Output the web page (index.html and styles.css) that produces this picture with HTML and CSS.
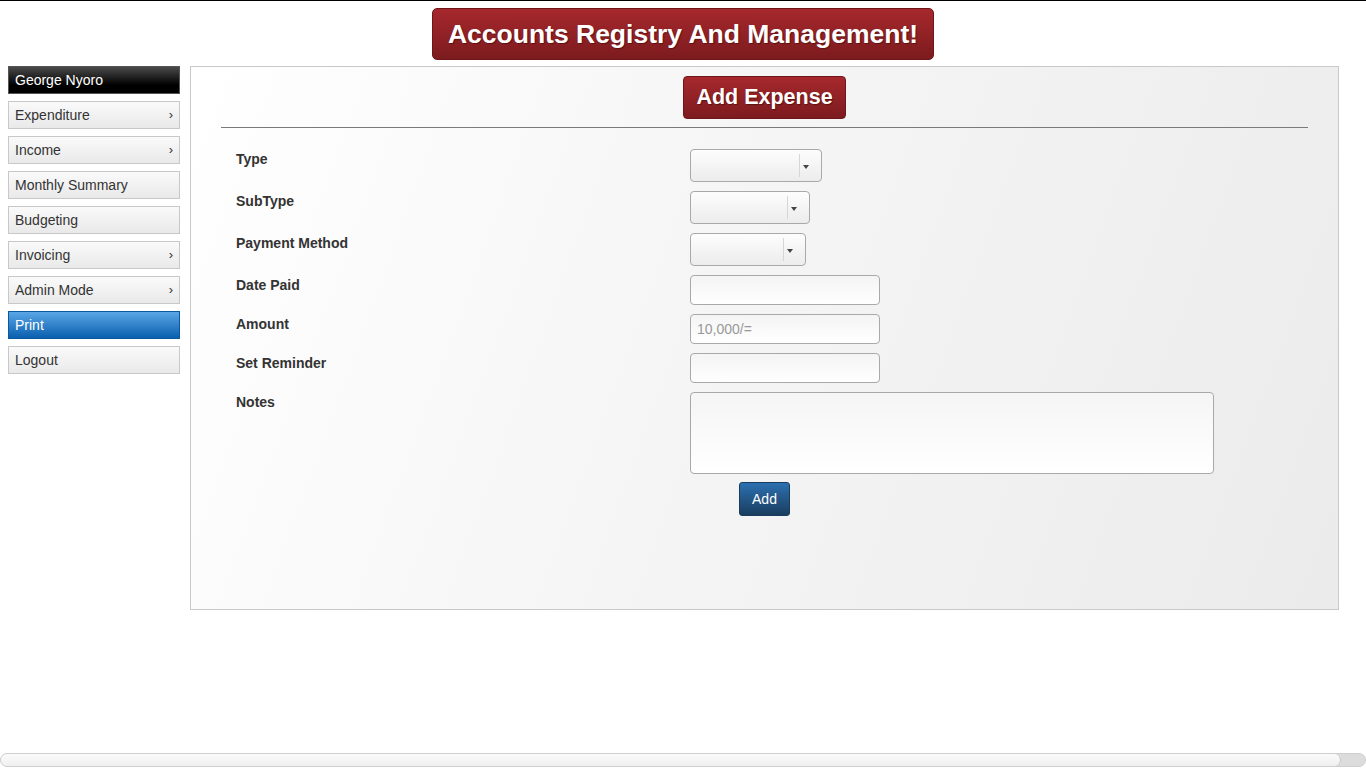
FILE: index.html
```html
<!DOCTYPE html>
<html>
<head>
<meta charset="utf-8">
<title>Accounts Registry And Management</title>
<link rel="stylesheet" href="styles.css">
</head>
<body>
<header class="top">
  <h1 class="title-btn">Accounts Registry And Management!</h1>
</header>
<div class="layout">
  <nav class="sidebar">
    <div class="nav-item user">George Nyoro</div>
    <div class="nav-item has-sub">Expenditure<span class="chev">›</span></div>
    <div class="nav-item has-sub">Income<span class="chev">›</span></div>
    <div class="nav-item">Monthly Summary</div>
    <div class="nav-item">Budgeting</div>
    <div class="nav-item has-sub">Invoicing<span class="chev">›</span></div>
    <div class="nav-item has-sub">Admin Mode<span class="chev">›</span></div>
    <div class="nav-item active">Print</div>
    <div class="nav-item">Logout</div>
  </nav>
  <main class="panel">
    <div class="panel-head">
      <h2 class="sub-btn">Add Expense</h2>
    </div>
    <hr class="rule">
    <form class="form">
      <label class="lbl">Type</label>
      <div class="field"><div class="select w132"><span class="sel-arrow"></span></div></div>
      <label class="lbl">SubType</label>
      <div class="field"><div class="select w120"><span class="sel-arrow"></span></div></div>
      <label class="lbl">Payment Method</label>
      <div class="field"><div class="select w116"><span class="sel-arrow"></span></div></div>
      <label class="lbl">Date Paid</label>
      <div class="field"><input class="inp" type="text"></div>
      <label class="lbl">Amount</label>
      <div class="field"><input class="inp" type="text" placeholder="10,000/="></div>
      <label class="lbl">Set Reminder</label>
      <div class="field"><input class="inp" type="text"></div>
      <label class="lbl">Notes</label>
      <div class="field"><textarea class="txt"></textarea></div>
      <div></div>
      <div class="field actions"><button type="button" class="add-btn">Add</button></div>
    </form>
  </main>
</div>
<div class="hscroll"><div class="hthumb"></div></div>
</body>
</html>
```

FILE: styles.css
```css
* { box-sizing: border-box; }
html, body { margin: 0; padding: 0; }
body {
  font-family: "Liberation Sans", Arial, sans-serif;
  font-size: 14px;
  color: #333;
  background: #fff;
  border-top: 1px solid #000;
  min-height: 768px;
}
.top {
  display: flex;
  justify-content: center;
  padding-top: 7px;
}
.title-btn {
  margin: 0;
  width: 502px;
  height: 52px;
  display: flex;
  align-items: center;
  justify-content: center;
  font-size: 26.5px;
  font-weight: bold;
  color: #fff;
  text-shadow: 1px 1px 1px rgba(60, 10, 10, 0.6);
  background: linear-gradient(#a6282d, #7c1b1e);
  border: 1px solid #6e1619;
  border-radius: 5px;
}
.layout {
  display: flex;
  align-items: flex-start;
  padding: 6px 0 0 8px;
  gap: 10px;
}
.sidebar {
  width: 172px;
  display: flex;
  flex-direction: column;
  gap: 7px;
}
.nav-item {
  height: 28px;
  line-height: 26px;
  padding: 0 6px;
  border: 1px solid #c8c8c8;
  background: linear-gradient(#fafafa, #e9e9e9);
  color: #333;
  font-size: 14px;
  display: flex;
  justify-content: space-between;
  align-items: center;
}
.chev { font-size: 13px; color: #333; }
.nav-item.user {
  background: linear-gradient(#4a4a4a, #000 70%);
  border-color: #555;
  color: #fff;
}
.nav-item.active {
  background: linear-gradient(#5aa6e6, #0a5fae);
  border-color: #0b5aa0;
  color: #fff;
}
.panel {
  width: 1149px;
  height: 544px;
  border: 1px solid #c9c9c9;
  background: linear-gradient(110deg, #ffffff 0%, #f5f5f5 45%, #ebebeb 100%);
  padding: 9px 30px 0 30px;
}
.panel-head { display: flex; justify-content: center; }
.sub-btn {
  margin: 0;
  width: 163px;
  height: 43px;
  display: flex;
  align-items: center;
  justify-content: center;
  font-size: 21.5px;
  font-weight: bold;
  color: #fff;
  text-shadow: 1px 1px 1px rgba(60, 10, 10, 0.6);
  background: linear-gradient(#a6282d, #7c1b1e);
  border: 1px solid #6e1619;
  border-radius: 4px;
}
.rule {
  margin: 8px 0 0 0;
  border: 0;
  border-top: 1px solid #7a7a7a;
  height: 0;
}
.form {
  display: grid;
  grid-template-columns: 454px 1fr;
  row-gap: 9px;
  padding: 21px 0 0 15px;
}
.lbl {
  font-weight: bold;
  font-size: 14px;
  line-height: 20px;
  color: #333;
}
.field { display: flex; }
.select {
  position: relative;
  height: 33px;
  border: 1px solid #a9a9a9;
  border-radius: 4px;
  background: linear-gradient(#fdfdfd, #ececec);
}
.w132 { width: 132px; }
.w120 { width: 120px; }
.w116 { width: 116px; }
.sel-arrow {
  position: absolute;
  right: 0;
  top: 4px;
  bottom: 4px;
  width: 22px;
  border-left: 1px solid #d6d6d6;
}
.sel-arrow::after {
  content: "";
  position: absolute;
  left: 3px;
  top: 11px;
  border-left: 3px solid transparent;
  border-right: 3px solid transparent;
  border-top: 4px solid #444;
}
.inp {
  width: 190px;
  height: 30px;
  border: 1px solid #a9a9a9;
  border-radius: 4px;
  background: linear-gradient(#f4f4f4, #fff);
  font-family: "Liberation Sans", Arial, sans-serif;
  font-size: 14px;
  padding: 0 6px;
  color: #333;
}
.inp::placeholder { color: #999; }
.txt {
  width: 524px;
  height: 82px;
  border: 1px solid #a9a9a9;
  border-radius: 4px;
  background: linear-gradient(#f5f5f5, #fff);
  resize: none;
  font-family: "Liberation Sans", Arial, sans-serif;
}
.actions { margin-top: -1px; padding-left: 49px; }
.add-btn {
  width: 51px;
  height: 34px;
  border: 1px solid #1a3c5c;
  border-radius: 3px;
  background: linear-gradient(#2c70b0, #1a3d5f);
  color: #fff;
  font-family: "Liberation Sans", Arial, sans-serif;
  font-size: 14px;
  padding: 0;
}
.hscroll {
  position: fixed;
  left: 0;
  right: 0;
  bottom: 1px;
  height: 14px;
  border: 1px solid #cfcfcf;
  border-radius: 7px;
  background: #dcdcdc;
}
.hthumb {
  width: 1340px;
  height: 100%;
  border-right: 1px solid #c8c8c8;
  border-radius: 6px;
  background: linear-gradient(#fbfbfb, #efefef);
}
```
